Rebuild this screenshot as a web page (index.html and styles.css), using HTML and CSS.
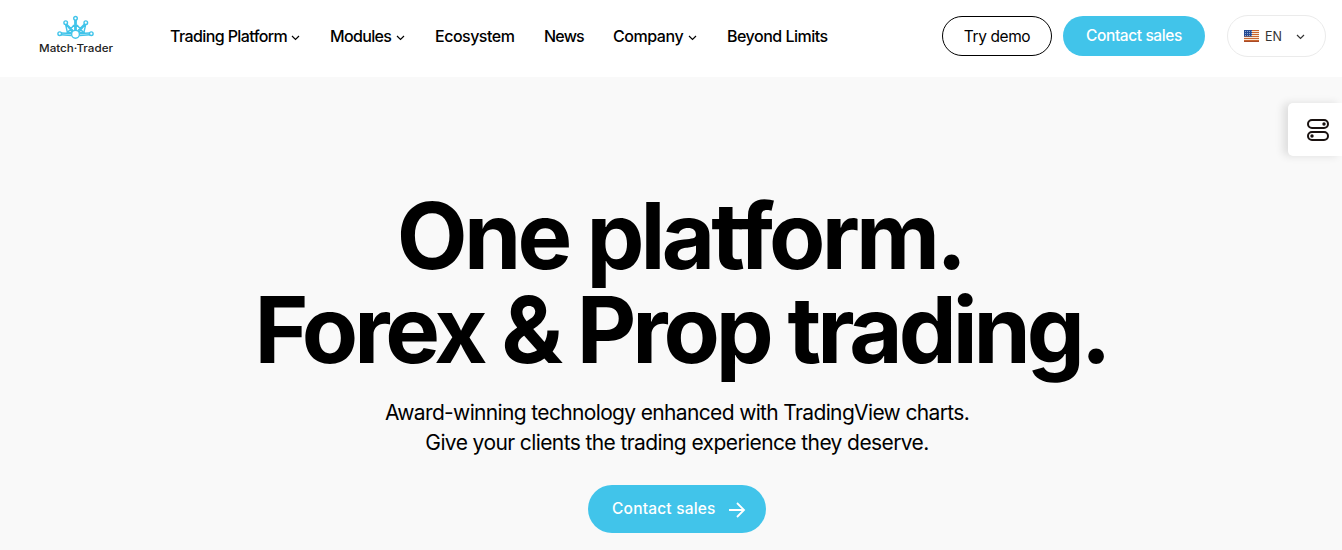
FILE: index.html
```html
<!DOCTYPE html>
<html lang="en">

<head>
    <meta charset="utf-8">
    <title>Match-Trader</title>
    <link rel="stylesheet" href="styles.css">
</head>

<body>
    <header class="header">
        <a class="logo" href="#">
            <svg width="76" height="42" viewBox="0 0 76 42">
                <g fill="none" stroke="#41c4ea" stroke-width="1.4">
                    <path d="M36.8 5v11M38.2 5v11M27.5 9l2 9 5-1zM28.5 9l7 7M47.8 9l-2 9-5-1zM46.5 9l-7 7M23 18l10.5.5M23 19.7l10.5.8M52 18l-10.5.5M52 19.7l-10.5.8M30 17l6-7M45 17l-6-7" />
                    <g fill="#fff">
                        <circle cx="37.5" cy="3.3" r="1.8" />
                        <circle cx="27.7" cy="7.7" r="1.8" />
                        <circle cx="47.8" cy="7.7" r="1.8" />
                        <circle cx="21.7" cy="18.7" r="1.8" />
                        <circle cx="53.3" cy="18.7" r="1.8" />
                        <circle cx="37.5" cy="19.3" r="3.9" />
                    </g>
                </g>
                <text class="logo-text" x="1" y="37" textLength="74" lengthAdjust="spacingAndGlyphs">Match·Trader</text>
            </svg>
        </a>
        <nav class="nav">
            <a class="nav-item" href="#"><span class="w-platform">Trading Platform</span><svg class="chevron" viewBox="0 0 9 6"><path d="M1 1l3.5 3.5L8 1" /></svg></a>
            <a class="nav-item" href="#"><span class="w-modules">Modules</span><svg class="chevron" viewBox="0 0 9 6"><path d="M1 1l3.5 3.5L8 1" /></svg></a>
            <a class="nav-item" href="#"><span class="w-ecosystem">Ecosystem</span></a>
            <a class="nav-item" href="#"><span class="w-news">News</span></a>
            <a class="nav-item" href="#"><span class="w-company">Company</span><svg class="chevron" viewBox="0 0 9 6"><path d="M1 1l3.5 3.5L8 1" /></svg></a>
            <a class="nav-item" href="#"><span class="w-limits">Beyond Limits</span></a>
        </nav>
        <div class="actions">
            <a class="btn btn-outline" href="#">Try demo</a>
            <a class="btn btn-primary" href="#">Contact sales</a>
            <div class="lang">
                <svg class="flag" width="15" height="12" viewBox="0 0 15 12">
                    <rect width="15" height="12" fill="#f5e9dc" />
                    <path d="M0 .5h15M0 2.5h15M0 4.5h15M0 6.5h15M0 8.5h15M0 10.5h15" stroke="#c9652f" />
                    <rect width="8" height="6.5" fill="#244a94" />
                    <path d="M1 1.5h7M1 3.5h7M1 5.5h7" stroke="#8da6cf" stroke-dasharray="1 1" />
                    <path d="M0 11.5h15" stroke="#a94b27" />
                </svg>
                <span>EN</span>
                <svg class="chevron" viewBox="0 0 9 6"><path d="M1 1l3.5 3.5L8 1" /></svg>
            </div>
        </div>
    </header>

    <main class="hero">
        <h1 class="title">
            <span class="title-top">One platform.</span>
            <span class="title-bottom">Forex &amp; Prop trading.</span>
        </h1>
        <p class="lead">
            <span class="lead-top">Award-winning technology enhanced with TradingView charts.</span>
            <span class="lead-bottom">Give your clients the trading experience they deserve.</span>
        </p>
        <a class="cta" href="#">
            <span>Contact sales</span>
            <svg width="18" height="18" viewBox="0 0 18 18"><path d="M1 10h15M9 3l7 7-7 7" /></svg>
        </a>
    </main>

    <div class="side-tab">
        <svg width="24" height="24" viewBox="0 0 24 24">
            <rect x="2" y="2" width="20" height="8" rx="4" />
            <rect x="2" y="14" width="20" height="8" rx="4" />
            <circle cx="18" cy="6" r="1.7" />
            <circle cx="6" cy="18" r="1.7" />
        </svg>
    </div>
</body>

</html>
```
FILE: styles.css
```css
* {
    box-sizing: border-box;
}

body {
    margin: 0;
    height: 550px;
    overflow: hidden;
    background: #f9f9f9;
    color: #000;
    font-family: Inter, "Liberation Sans", sans-serif;
}

a {
    color: inherit;
    text-decoration: none;
}

svg {
    display: block;
}

.header {
    display: flex;
    align-items: flex-start;
    height: 77px;
    padding: 15px 16px 0 38px;
    background: #fff;
}

.logo-text {
    font-size: 11px;
    font-weight: 500;
    fill: #222;
}

.nav {
    display: flex;
    gap: 30px;
    margin-left: 56px;
    font-size: 16px;
    font-weight: 500;
    line-height: 43px;
    white-space: nowrap;
}

.nav-item {
    display: flex;
    align-items: center;
    gap: 5px;
    letter-spacing: -0.6px;
}

.chevron {
    width: 9px;
    height: 6px;
    margin-top: 2px;
    fill: none;
    stroke: currentColor;
    stroke-width: 1.2;
}

.w-platform {
    width: 116px;
}

.w-modules {
    width: 61px;
    letter-spacing: -0.65px;
}

.w-ecosystem {
    width: 79px;
    letter-spacing: -0.5px;
}

.w-news {
    width: 39px;
    letter-spacing: -0.8px;
}

.w-company {
    width: 70px;
    letter-spacing: -0.45px;
}

.w-limits {
    width: 101px;
    letter-spacing: -0.5px;
}

.actions {
    display: flex;
    margin-left: auto;
    white-space: nowrap;
}

.btn {
    height: 40px;
    margin-top: 1px;
    border-radius: 20px;
    font-size: 15.5px;
    letter-spacing: -0.4px;
    text-align: center;
}

.btn-outline {
    width: 110px;
    border: 1px solid #000;
    line-height: 40px;
}

.btn-primary {
    width: 142px;
    margin-left: 11px;
    background: #41c4ea;
    color: #fff;
    font-weight: 500;
    line-height: 39px;
}

.lang {
    display: flex;
    align-items: center;
    width: 99px;
    height: 42px;
    margin-left: 22px;
    padding-left: 16px;
    border: 1px solid #ebebeb;
    border-radius: 21px;
    color: #333;
    font-size: 12.5px;
}

.lang span {
    width: 17px;
    margin: 0 14px 0 6px;
}

.hero {
    display: flex;
    flex-direction: column;
    align-items: center;
    padding: 112px 0 0 12px;
}

.title {
    display: flex;
    flex-direction: column;
    align-items: center;
    margin: 0;
    font-size: 92px;
    font-weight: 700;
    line-height: 94px;
    white-space: nowrap;
}

.title-top {
    padding-left: 6px;
    letter-spacing: -3.8px;
}

.title-bottom {
    padding-left: 8px;
    letter-spacing: -4.05px;
}

.lead {
    display: flex;
    flex-direction: column;
    align-items: center;
    margin: 21px 0 0;
    font-size: 21px;
    line-height: 30px;
    white-space: nowrap;
}

.lead-top {
    letter-spacing: -0.65px;
}

.lead-bottom {
    letter-spacing: -0.6px;
}

.cta {
    display: flex;
    align-items: center;
    justify-content: space-between;
    width: 178px;
    height: 48px;
    margin-top: 27px;
    padding: 0 20px 0 24px;
    border-radius: 24px;
    background: #41c4ea;
    color: #fff;
    font-size: 15.5px;
    font-weight: 500;
    letter-spacing: 0.2px;
    line-height: 18px;
    white-space: nowrap;
}

.cta span {
    padding-bottom: 1px;
}

.cta svg {
    fill: none;
    stroke: #fff;
    stroke-width: 1.8;
}

.side-tab {
    position: absolute;
    top: 103px;
    right: 0;
    width: 54px;
    height: 53px;
    padding: 15px 0 0 18px;
    border-radius: 5px 0 0 5px;
    background: #fff;
    box-shadow: -5px 0 8px rgba(0, 0, 0, 0.11);
}

.side-tab svg {
    fill: none;
    stroke: #1a1210;
    stroke-width: 2;
}

.side-tab circle {
    fill: #1a1210;
    stroke: none;
}
```
